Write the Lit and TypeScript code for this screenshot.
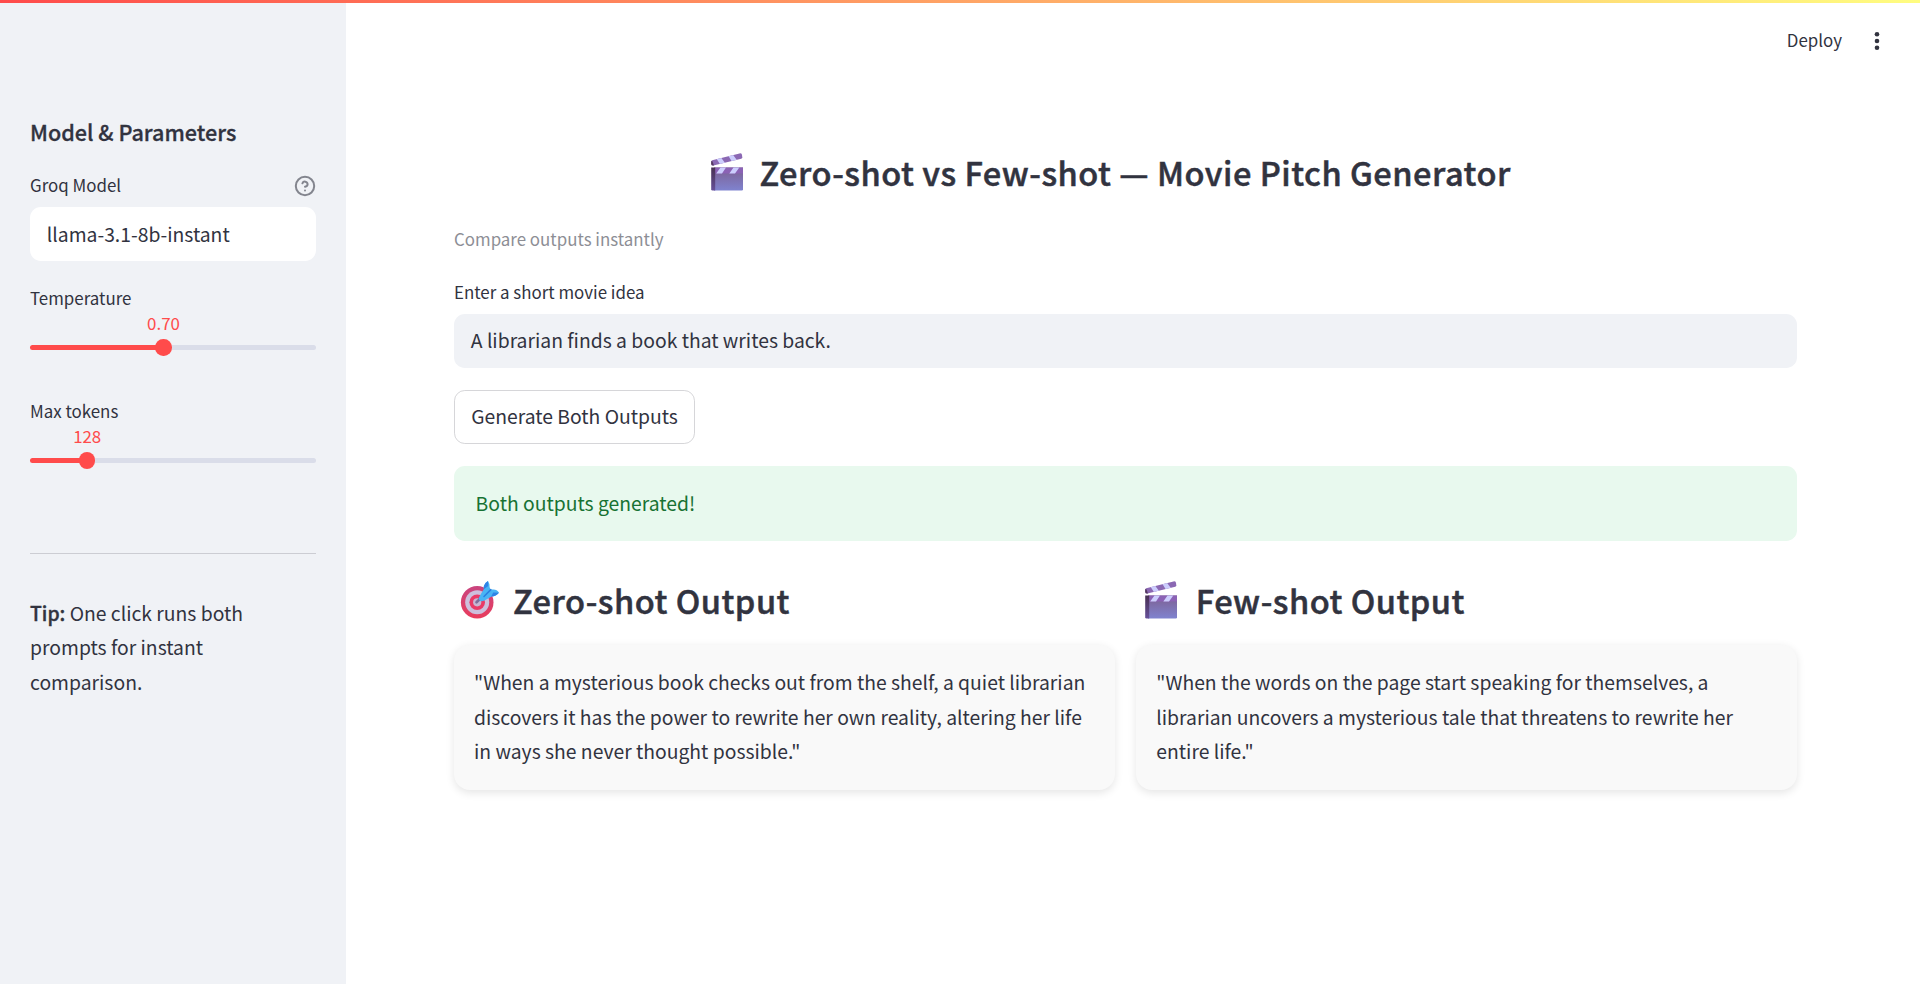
import { LitElement, html, css } from "lit";
import { customElement, property, state } from "lit/decorators.js";

const clapper = html`
  <svg class="emoji clap" width="34" height="40" viewBox="0 0 34 40" aria-hidden="true">
    <defs>
      <linearGradient id="board" x1="0" y1="0" x2="0" y2="1">
        <stop offset="0" stop-color="#7d5f91"></stop>
        <stop offset="1" stop-color="#7f83cf"></stop>
      </linearGradient>
      <linearGradient id="side" x1="0" y1="0" x2="0" y2="1">
        <stop offset="0" stop-color="#483052"></stop>
        <stop offset="1" stop-color="#66509a"></stop>
      </linearGradient>
      <clipPath id="arm"><path d="M2.2 8.2 29.5 1.4Q31.4 1 32 2.8L32.3 5.2Q32.3 6.4 31.2 6.8L3.4 13.6Q1.4 13.8 1.2 12V10Q1.2 8.6 2.2 8.2Z"></path></clipPath>
    </defs>
    <g clip-path="url(#arm)">
      <path fill="#8b68b3" d="M0 0H34V15H0Z"></path>
      <path fill="#cccdfd" d="M6.4 6.5 11 5.5 15.8 12 10.5 13ZM18 3.3 22.6 2.3 27.4 8.8 22 9.8Z"></path>
      <path fill="#55395f" d="M0 8 2.4 9.2 4.2 14H0Z"></path>
    </g>
    <path fill="url(#board)" d="M4 15.5H33V37.2Q33 38.5 31.7 38.5H4Z"></path>
    <path fill="#8b62b5" d="M5 15.5H33V21.5H5Z"></path>
    <path fill="#cccdfd" d="M10.5 15.5H16L12 21.5H6.2ZM23.5 15.5H29.3L25 21.5H19.3Z"></path>
    <path fill="url(#side)" d="M1.2 15.5H5.2V38.5H2.6Q1.2 38.5 1.2 37.2Z"></path>
  </svg>`;

const target = html`
  <svg class="emoji dart" width="40" height="40" viewBox="0 0 40 40" aria-hidden="true">
    <defs>
      <linearGradient id="rim" x1="0" y1="0" x2="0" y2="1">
        <stop offset="0" stop-color="#c9447f"></stop>
        <stop offset="1" stop-color="#e93c5c"></stop>
      </linearGradient>
    </defs>
    <circle cx="17.2" cy="22.3" r="16.3" fill="url(#rim)"></circle>
    <circle cx="17.2" cy="22.3" r="12" fill="#cdbfdc"></circle>
    <circle cx="17.2" cy="22.3" r="7.8" fill="#ea3a66"></circle>
    <circle cx="17.2" cy="22.3" r="4.1" fill="#c8b6d2"></circle>
    <path d="M16.5 22.3 24.5 14.5" stroke="#7d6f9b" stroke-width="2.6" stroke-linecap="round"></path>
    <path fill="#48b4f4" d="M23.8 9.2Q23 6 25.5 3L28 1Q30 4 29.6 7L30.4 9.4 33.5 9.6Q37 9.6 39 12.8Q36 16.5 31.5 16.4L24.5 20.6Q20.5 22 19.2 20Q18.3 18 20 15.6Z"></path>
    <path fill="#2f83e6" d="M23.8 9.2Q23 6 25.5 3L28 1 28.2 6ZM31.2 16.4 33.2 12.6 39 12.8Q36 16.5 31.2 16.4Z"></path>
    <path d="M24 16.5 30.8 9.6" stroke="#2b7fe0" stroke-width="1.5" stroke-linecap="round"></path>
  </svg>`;

@customElement("param-slider")
class ParamSlider extends LitElement {
  @property() label = "";
  @property() value = "";
  @property({ type: Number }) percent = 0;

  static styles = css`
    :host { display: block; }
    .label { height: 24px; line-height: 24px; font-size: 16.9px; }
    .row { display: flex; height: 22px; margin-top: 2px; }
    .before { flex: none; }
    .value {
      width: 0; display: flex; justify-content: center; white-space: nowrap;
      font-size: 16.9px; line-height: 22px; color: #ff4b4b;
    }
    .track { display: flex; align-items: center; height: 16px; margin-top: 5.5px; }
    .bar { flex: 1; height: 5.4px; border-radius: 3px; }
    .thumb { width: 16.4px; height: 16.4px; margin: 0 -8.2px; border-radius: 50%; background: #ff4b4b; z-index: 1; }
    .filled { flex: none; background: #ff4b4b; border-radius: 3px 0 0 3px; }
    .rest { background: #dadde9; border-radius: 0 3px 3px 0; }
  `;

  render() {
    return html`
      <div class="label">${this.label}</div>
      <div class="row">
        <div class="before" style="width:${this.percent}%"></div>
        <div class="value">${this.value}</div>
      </div>
      <div class="track">
        <div class="bar filled" style="width:${this.percent}%"></div>
        <div class="thumb"></div>
        <div class="bar rest"></div>
      </div>`;
  }
}

@customElement("app-root")
class AppRoot extends LitElement {
  @state() private idea = "A librarian finds a book that writes back.";

  static styles = css`
    :host {
      display: grid; grid-template-columns: 346px 1fr; height: 984px; overflow: hidden;
      position: relative; box-sizing: border-box; background: #fff; color: #31333f;
      font-family: "Noto Sans CJK SC", "Source Sans Pro", sans-serif; font-size: 19.33px; line-height: 34.56px;
    }
    * { box-sizing: border-box; }
    .decoration {
      position: absolute; top: 0; left: 0; right: 0; height: 3px; z-index: 2;
      background: linear-gradient(90deg, #ff4b4b, #fffd80);
    }
    .sidebar { background: #f0f2f6; padding: 117px 30px 0; }
    .side-title { margin: 0; height: 30px; line-height: 30px; font-size: 21.6px; font-weight: 500; -webkit-text-stroke: 0.3px #31333f; }
    .field-head { display: flex; justify-content: space-between; align-items: center; height: 24px; margin-top: 26px; line-height: 24px; font-size: 16.9px; }
    .help { width: 22px; height: 22px; display: block; margin-top: 2px; }
    .box { display: flex; align-items: center; height: 54px; border-radius: 10.8px; padding: 0 16.8px 2px; line-height: 30px; }
    .select { background: #fff; margin-top: 10px; padding-bottom: 1px; }
    .first { margin-top: 25px; }
    .second { margin-top: 43.5px; }
    .rule { height: 1px; background: #cccdd3; margin-top: 84px; }
    .tip { margin: 42px 0 0; }
    .tip strong { font-weight: 500; -webkit-text-stroke: 0.4px #31333f; }
    .main { padding: 0 0 0 108px; display: flex; flex-direction: column; }
    .toolbar { display: flex; justify-content: flex-end; align-items: center; height: 81px; padding-right: 36.5px; }
    .deploy { font-size: 16.9px; line-height: 24px; margin-right: 27.5px; padding-bottom: 1px; }
    .dots { display: block; width: 14px; height: 22px; }
    .content { width: 1343px; }
    .title, .heading { display: flex; align-items: center; height: 44px; line-height: 44px; margin: 0; font-size: 32.6px; font-weight: 500; letter-spacing: 0.5px; -webkit-text-stroke: 0.5px #31333f; white-space: nowrap; }
    .title { padding-left: 255px; margin-top: 69px; }
    .emoji { flex: none; display: block; }
    .title .clap { margin-left: 0.7px; margin-right: 15.8px; }
    .caption { height: 24px; line-height: 24px; font-size: 16.9px; color: #8d8e95; margin-top: 33px; }
    .label { height: 24px; line-height: 24px; font-size: 16.9px; margin-top: 29px; }
    .input { background: #f0f2f6; margin-top: 10px; }
    .button {
      display: flex; align-items: center; justify-content: center; width: 241px; height: 54px; margin-top: 22px; padding: 0 0 2px;
      border: 1px solid #d6d6d9; border-radius: 10.8px; background: #fff; color: inherit; font: inherit; line-height: 30px;
    }
    .success { display: flex; align-items: center; height: 75px; margin-top: 22px; padding: 0 21.6px 1px; border-radius: 10.8px; background: #e8f9ee; color: #177233; }
    .columns { display: grid; grid-template-columns: 1fr 1fr; gap: 21.6px; margin-top: 37px; }
    .heading { padding-left: 6px; height: 44px; }
    .heading .dart { margin-right: 13px; }
    .heading .clap { margin-left: 2px; margin-right: 17.5px; }
    .card { margin-top: 23px; height: 145px; padding: 20px 20px; border-radius: 16px; background: #f9f9f9; box-shadow: 0 2.7px 8.1px rgba(0, 0, 0, 0.1); white-space: nowrap; }
  `;

  render() {
    return html`
      <div class="decoration"></div>
      <aside class="sidebar">
        <h2 class="side-title">Model &amp; Parameters</h2>
        <div class="field-head">
          <span>Groq Model</span>
          <svg class="help" viewBox="0 0 22 22" fill="none" stroke="#83858e" stroke-width="2" stroke-linecap="round" stroke-linejoin="round">
            <circle cx="11" cy="11" r="9.2"></circle>
            <path d="M8.4 8.3A2.7 2.7 0 0 1 13.6 9.2C13.6 11 11 11.8 11 11.8"></path>
            <path d="M11 15.4H11.01"></path>
          </svg>
        </div>
        <div class="box select">llama-3.1-8b-instant</div>
        <param-slider class="first" label="Temperature" value="0.70" .percent=${46.67}></param-slider>
        <param-slider class="second" label="Max tokens" value="128" .percent=${20}></param-slider>
        <div class="rule"></div>
        <p class="tip"><strong>Tip:</strong> One click runs both<br />prompts for instant<br />comparison.</p>
      </aside>
      <main class="main">
        <header class="toolbar">
          <span class="deploy">Deploy</span>
          <svg class="dots" viewBox="0 0 14 22" fill="#31333f">
            <circle cx="7" cy="4.3" r="2.3"></circle>
            <circle cx="7" cy="11" r="2.3"></circle>
            <circle cx="7" cy="17.7" r="2.3"></circle>
          </svg>
        </header>
        <div class="content">
          <h1 class="title">${clapper}<span>Zero-shot vs Few-shot — Movie Pitch Generator</span></h1>
          <div class="caption">Compare outputs instantly</div>
          <div class="label">Enter a short movie idea</div>
          <div class="box input">${this.idea}</div>
          <button class="button">Generate Both Outputs</button>
          <div class="success">Both outputs generated!</div>
          <div class="columns">
            <section>
              <h2 class="heading">${target}<span>Zero-shot Output</span></h2>
              <div class="card">"When a mysterious book checks out from the shelf, a quiet librarian<br />discovers it has the power to rewrite her own reality, altering her life<br />in ways she never thought possible."</div>
            </section>
            <section>
              <h2 class="heading">${clapper}<span>Few-shot Output</span></h2>
              <div class="card">"When the words on the page start speaking for themselves, a<br />librarian uncovers a mysterious tale that threatens to rewrite her<br />entire life."</div>
            </section>
          </div>
        </div>
      </main>`;
  }
}
